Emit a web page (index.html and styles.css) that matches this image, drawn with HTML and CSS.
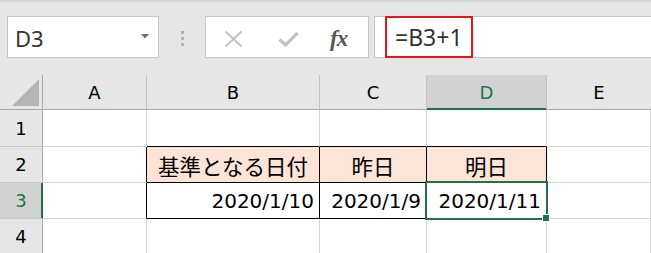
FILE: index.html
```html
<!DOCTYPE html>
<html lang="ja">
<head>
<meta charset="utf-8">
<title>Excel</title>
<link rel="stylesheet" href="styles.css">
</head>
<body>
<div class="app">
  <div class="topstrip"></div>
  <div class="fbar">
    <div class="namebox">
      <span class="name">D3</span>
      <svg class="dd" width="8" height="5" viewBox="0 0 8 5"><path d="M0 0H8L4 4.5Z" fill="#6d6d6d"/></svg>
    </div>
    <div class="dots"><i></i><i></i><i></i></div>
    <div class="btns">
      <svg class="ico-x" width="19" height="18" viewBox="0 0 19 18"><path d="M1.5 1.5L17.5 16.5M17.5 1.5L1.5 16.5" stroke="#c2c2c2" stroke-width="2" fill="none"/></svg>
      <svg class="ico-ok" width="21" height="16" viewBox="0 0 21 16"><path d="M1.5 8.5L7.5 14L19.5 2" stroke="#c2c2c2" stroke-width="3.2" fill="none"/></svg>
      <span class="fx">fx</span>
    </div>
    <div class="input">
      <span class="formula">=B3+1</span>
    </div>
  </div>
  <div class="sheet">
    <div class="grid">
      <div class="corner"><svg width="43" height="35" viewBox="0 0 43 35"><path d="M12 31H39V4Z" fill="#b5b5b5"/></svg></div>
      <div class="ch">A</div>
      <div class="ch">B</div>
      <div class="ch">C</div>
      <div class="ch sel">D</div>
      <div class="ch last">E</div>

      <div class="rh">1</div>
      <div class="c"></div>
      <div class="c bb"></div>
      <div class="c bb"></div>
      <div class="c bb"></div>
      <div class="c"></div>

      <div class="rh">2</div>
      <div class="c br"></div>
      <div class="c hd br bb">基準となる日付</div>
      <div class="c hd br bb">昨日</div>
      <div class="c hd br bb">明日</div>
      <div class="c"></div>

      <div class="rh sel">3</div>
      <div class="c br"></div>
      <div class="c num br bb">2020/1/10</div>
      <div class="c num br bb">2020/1/9</div>
      <div class="c num br bb">2020/1/11</div>
      <div class="c"></div>

      <div class="rh">4</div>
      <div class="c"></div>
      <div class="c"></div>
      <div class="c"></div>
      <div class="c"></div>
      <div class="c"></div>
    </div>
    <div class="selbox"></div>
    <div class="handle"></div>
  </div>
</div>
</body>
</html>
```
FILE: styles.css
```css
* { box-sizing: border-box; }
html, body { margin: 0; padding: 0; }
body {
  background: #e6e6e6;
  width: 651px;
  height: 253px;
  overflow: hidden;
  font-family: "Noto Sans", "Noto Sans CJK JP", sans-serif;
}
.app { width: 651px; }
.topstrip { height: 2px; background: #d5d5d5; }
.fbar {
  display: flex;
  align-items: stretch;
  padding: 14px 0 0 7px;
  height: 58px;
}
.namebox {
  width: 152px;
  height: 42px;
  background: #fff;
  border: 1px solid #c6c6c6;
  display: flex;
  align-items: center;
  padding: 0 0 0 7px;
  position: relative;
}
.name { font-size: 22px; color: #333; line-height: 1; margin-top: 1px; }
.dd { position: absolute; right: 9px; top: 17px; }
.dots {
  width: 46px;
  display: flex;
  flex-direction: column;
  align-items: center;
  justify-content: center;
  gap: 3px;
}
.dots i { display: block; width: 3px; height: 3px; background: #b3b3b3; }
.btns {
  width: 164px;
  height: 42px;
  background: #fff;
  border: 1px solid #c6c6c6;
  display: flex;
  align-items: center;
  padding-left: 18px;
}
.ico-x { margin-top: 3px; }
.ico-ok { margin-left: 35px; margin-top: 3px; }
.fx {
  margin-left: 31px;
  margin-top: 3px;
  font-family: "Liberation Serif", serif;
  font-style: italic;
  font-weight: bold;
  font-size: 23px;
  color: #555;
  letter-spacing: -1px;
}
.input {
  margin-left: 5px;
  flex: 1;
  height: 42px;
  background: #fff;
  border: 1px solid #c6c6c6;
  border-right: none;
  padding-left: 10px;
}
.formula {
  display: flex;
  align-items: center;
  width: 88px;
  height: 42px;
  margin-top: -1px;
  border: 2px solid #e8141a;
  padding-left: 8px;
  font-size: 23px;
  color: #333;
}
.sheet {
  position: relative;
  margin-top: 15px;
}
.grid {
  display: grid;
  grid-template-columns: 43px 104px 173px 107px 120px 1fr;
  grid-template-rows: 35px 37px 36px 36px 35px;
  font-family: "DejaVu Sans", "Noto Sans CJK JP", sans-serif;
  background: #fff;
}
.corner {
  background: #e6e6e6;
  border-right: 1px solid #ababab;
  border-bottom: 1px solid #ababab;
}
.corner svg { display: block; }
.ch {
  background: #e6e6e6;
  border-right: 1px solid #c3c3c3;
  border-bottom: 1px solid #ababab;
  display: flex;
  align-items: center;
  justify-content: center;
  font-size: 18px;
  color: #000;
  padding-top: 1px;
}
.ch.last { border-right: none; }
.ch.sel {
  background: #d2d2d2;
  color: #217346;
  border-bottom: 1px solid #217346;
  box-shadow: inset 0 -1px 0 #217346;
}
.rh {
  background: #e6e6e6;
  border-right: 1px solid #ababab;
  border-bottom: 1px solid #c8c8c8;
  display: flex;
  align-items: center;
  justify-content: center;
  font-size: 18px;
  color: #000;
}
.rh.sel {
  background: #d2d2d2;
  color: #217346;
  border-right: 1px solid #217346;
  box-shadow: inset -1px 0 0 #217346;
}
.c {
  border-right: 1px solid #d4d4d4;
  border-bottom: 1px solid #d4d4d4;
  display: flex;
  align-items: center;
  font-size: 20px;
  color: #000;
  white-space: nowrap;
}
.c.br { border-right-color: #000; }
.c.bb { border-bottom-color: #000; }
.c.hd {
  background: #fce4d6;
  justify-content: center;
  font-family: "Noto Sans CJK JP", sans-serif;
  font-size: 21.5px;
  padding-top: 1px;
}
.c.num {
  justify-content: flex-end;
  padding-right: 5px;
  padding-top: 1px;
}
.selbox {
  position: absolute;
  left: 425px;
  top: 106px;
  width: 123px;
  height: 39px;
  border: 2px solid #217346;
}
.handle {
  position: absolute;
  left: 542px;
  top: 139px;
  width: 8px;
  height: 8px;
  background: #217346;
  border: 1px solid #fff;
}
```
